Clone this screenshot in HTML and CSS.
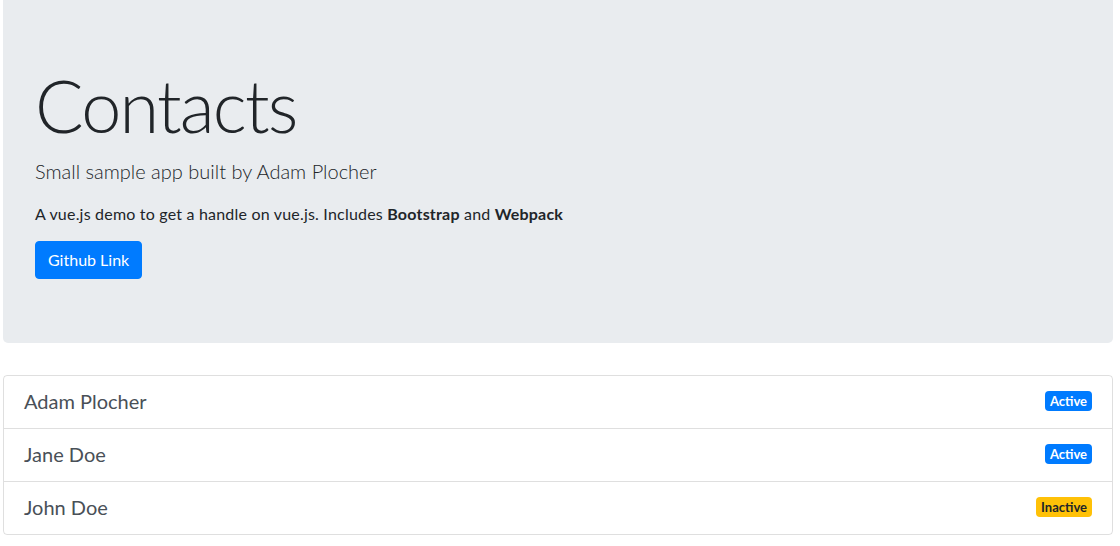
FILE: index.html
```html
<!DOCTYPE html>
<html lang="en">
<head>
<meta charset="utf-8">
<title>Contacts</title>
<link rel="stylesheet" href="styles.css">
</head>
<body>
<div class="container">
  <div class="jumbotron">
    <h1 class="display">Contacts</h1>
    <p class="lead">Small sample app built by Adam Plocher</p>
    <p class="intro">A vue.js demo to get a handle on vue.js. Includes <b>Bootstrap</b> and <b>Webpack</b></p>
    <a class="btn" href="#">Github Link</a>
  </div>
  <ul class="list">
    <li class="item"><span class="name">Adam Plocher</span><span class="badge badge-active">Active</span></li>
    <li class="item"><span class="name">Jane Doe</span><span class="badge badge-active">Active</span></li>
    <li class="item"><span class="name">John Doe</span><span class="badge badge-inactive">Inactive</span></li>
  </ul>
</div>
</body>
</html>
```
FILE: styles.css
```css
html, body {
  margin: 0;
  padding: 0;
  background: #fff;
}
body {
  font-family: "Lato", "Open Sans", sans-serif;
  font-size: 16px;
  line-height: 24px;
  color: #212529;
}
.container {
  width: 1110px;
  margin-left: 3px;
}
.jumbotron {
  background: #e9ecef;
  border-radius: 0 0 5px 5px;
  padding: 62px 32px 64px;
  margin-bottom: 32px;
}
.display {
  margin: 0 0 8px;
  font-size: 72px;
  font-weight: 300;
  line-height: 86px;
  letter-spacing: -1.8px;
}
.lead {
  margin: 0 0 16px;
  font-size: 20px;
  font-weight: 300;
  line-height: 30px;
}
.intro {
  margin: 0 0 15px;
  font-size: 16px;
  font-weight: 400;
  line-height: 24px;
  letter-spacing: 0.2px;
}
.intro b {
  font-weight: 700;
}
.btn {
  display: inline-block;
  box-sizing: border-box;
  height: 38px;
  padding: 6px 12px;
  border: 1px solid #007bff;
  border-radius: 4px;
  background: #007bff;
  color: #fff;
  text-decoration: none;
  font-size: 16px;
  line-height: 24px;
}
.list {
  list-style: none;
  margin: 0;
  padding: 0;
  border: 1px solid rgba(0,0,0,.125);
  border-radius: 4px;
}
.item {
  display: flex;
  justify-content: space-between;
  align-items: center;
  padding: 11px 20px 13px;
  line-height: 28px;
  border-top: 1px solid rgba(0,0,0,.125);
}
.item:first-child {
  border-top: 0;
}
.name {
  font-size: 20px;
  color: #495057;
}
.badge {
  display: inline-block;
  font-size: 13px;
  font-weight: 700;
  line-height: 14px;
  padding: 3px 5px;
  border-radius: 4px;
}
.badge-active {
  background: #007bff;
  color: #fff;
}
.badge-inactive {
  background: #ffc107;
  color: #212529;
}
```
